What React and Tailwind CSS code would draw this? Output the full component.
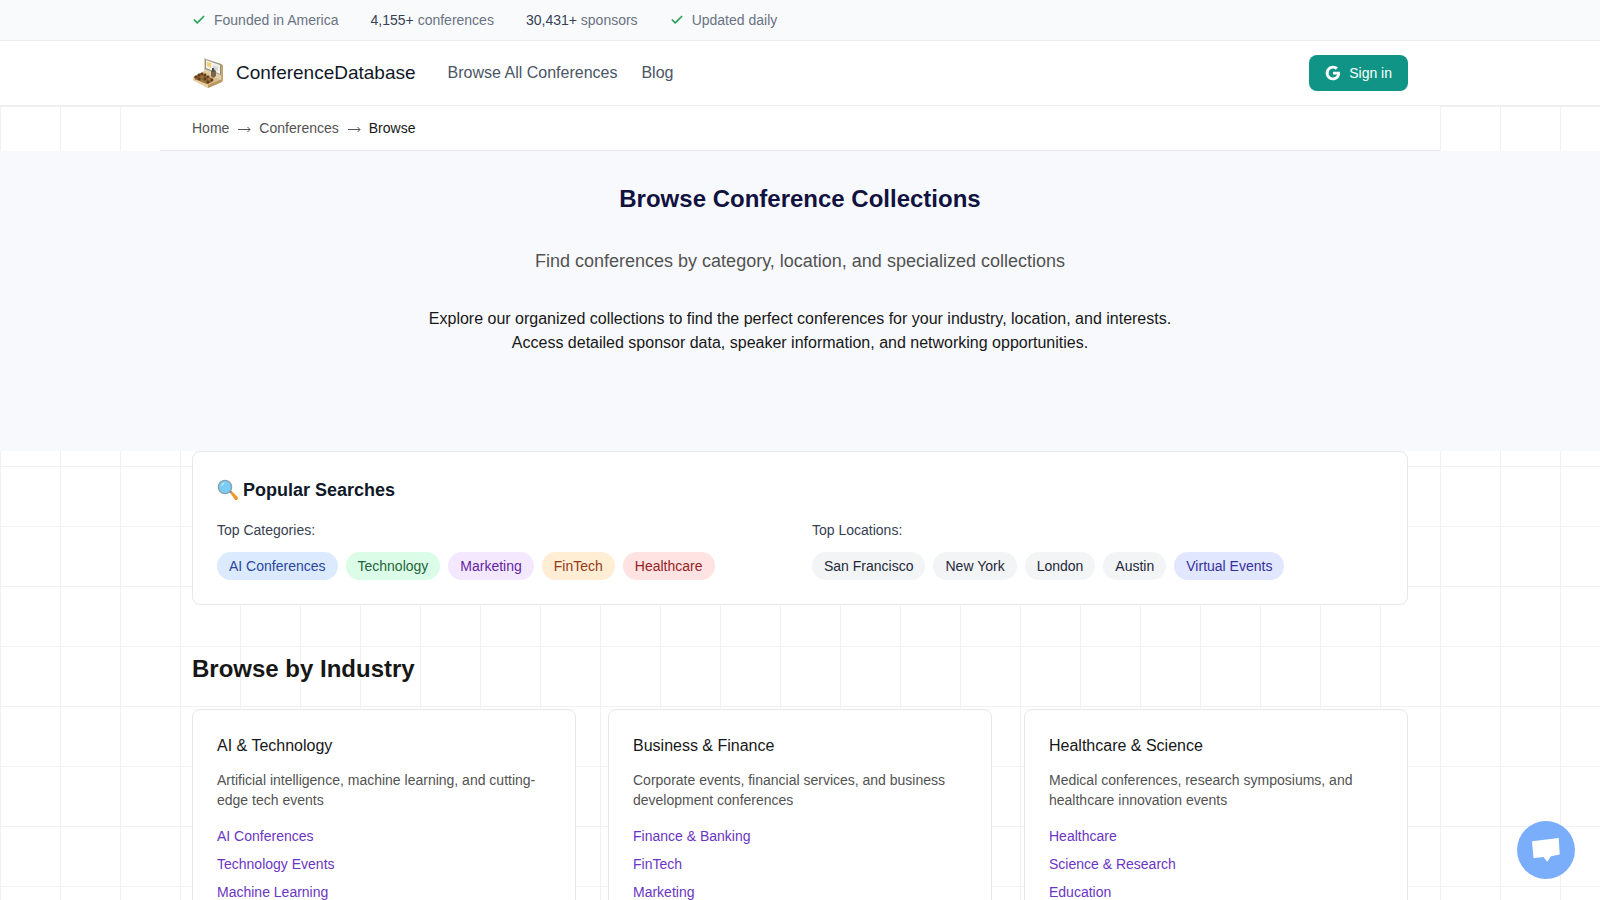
import React from "react";
import { Check } from "lucide-react";

const categories = [
  { label: "AI Conferences", style: "bg-blue-100 text-[#2a46a0]" },
  { label: "Technology", style: "bg-green-100 text-[#25643a]" },
  { label: "Marketing", style: "bg-purple-100 text-[#6425a0]" },
  { label: "FinTech", style: "bg-orange-100 text-[#933a1a]" },
  { label: "Healthcare", style: "bg-red-100 text-[#951f22]" },
];

const locations = [
  { label: "San Francisco", style: "bg-gray-100 text-gray-800" },
  { label: "New York", style: "bg-gray-100 text-gray-800" },
  { label: "London", style: "bg-gray-100 text-gray-800" },
  { label: "Austin", style: "bg-gray-100 text-gray-800" },
  { label: "Virtual Events", style: "bg-indigo-100 text-[#37309c]" },
];

const industries = [
  {
    title: "AI & Technology",
    description:
      "Artificial intelligence, machine learning, and cutting-edge tech events",
    links: ["AI Conferences", "Technology Events", "Machine Learning"],
  },
  {
    title: "Business & Finance",
    description:
      "Corporate events, financial services, and business development conferences",
    links: ["Finance & Banking", "FinTech", "Marketing"],
  },
  {
    title: "Healthcare & Science",
    description:
      "Medical conferences, research symposiums, and healthcare innovation events",
    links: ["Healthcare", "Science & Research", "Education"],
  },
];

function Logo() {
  return (
    <svg viewBox="0 0 32 32" className="h-8 w-8" aria-hidden="true">
      {/* floor slab */}
      <path d="M1 20 L14 13 L30 22 V25 L16 31 L1 23Z" fill="#d9bd8c" />
      <path d="M1 20 L16 28 V31 L1 23Z" fill="#e6cfa4" />
      <path d="M16 28 L30 22 V25 L16 31Z" fill="#b9995f" />
      {/* back wall and screen */}
      <path d="M12 1 L29 7 V23 L12 15Z" fill="#e2cfac" />
      <path d="M29 7 L31 8 V24 L29 25Z" fill="#c6a671" />
      <path d="M13 2 L29 7 V18 L13 12Z" fill="#8d8e86" />
      <path d="M14 3 L28 8 V17 L14 11Z" fill="#f3f1e8" />
      <path d="M15 5 L19 6 V11 L15 9Z" fill="#f2cf73" />
      <path d="M21 8 L26 10 V14 L21 12Z" fill="#d2dadd" />
      {/* podium */}
      <path d="M19 14 L22 12 L24 14 V19 L21 21 L19 19Z" fill="#7a6448" />
      <path d="M20 11 h2 v4 h-2Z" fill="#4a4d50" />
      {/* audience rows */}
      <path d="M2 20 L9 16 L21 22 L20 25 L15 27 L3 22Z" fill="#8a6436" />
      <g fill="#5f3d1c">
        <circle cx="4" cy="20" r="1.4" />
        <circle cx="7" cy="18" r="1.4" />
        <circle cx="10" cy="17" r="1.4" />
        <circle cx="7" cy="22" r="1.4" />
        <circle cx="13" cy="18" r="1.4" />
        <circle cx="13" cy="22" r="1.4" />
        <circle cx="16" cy="20" r="1.4" />
        <circle cx="16" cy="25" r="1.4" />
        <circle cx="20" cy="23" r="1.4" />
      </g>
      <g fill="#a5763c">
        <circle cx="10" cy="20" r="1.3" />
        <circle cx="10" cy="24" r="1.3" />
        <circle cx="13" cy="25" r="1.2" />
        <circle cx="17" cy="22" r="1.3" />
        <circle cx="4" cy="22" r="1.1" />
      </g>
    </svg>
  );
}

function GoogleIcon() {
  return (
    <svg viewBox="0 0 24 24" className="h-4 w-4" fill="currentColor" aria-hidden="true">
      <path d="M22.56 12.25c0-.78-.07-1.53-.2-2.25H12v4.26h5.92c-.26 1.37-1.04 2.53-2.21 3.31v2.77h3.57c2.08-1.92 3.28-4.74 3.28-8.09z" />
      <path d="M12 23c2.97 0 5.46-.98 7.28-2.66l-3.57-2.77c-.98.66-2.23 1.06-3.71 1.06-2.86 0-5.29-1.93-6.16-4.53H2.18v2.84C3.99 20.53 7.7 23 12 23z" />
      <path d="M5.84 14.09c-.22-.66-.35-1.36-.35-2.09s.13-1.43.35-2.09V7.07H2.18C1.43 8.55 1 10.22 1 12s.43 3.45 1.18 4.93l2.85-2.22.81-.62z" />
      <path d="M12 5.38c1.62 0 3.06.56 4.21 1.64l3.15-3.15C17.45 2.09 14.97 1 12 1 7.7 1 3.99 3.47 2.18 7.07l3.66 2.84c.87-2.6 3.3-4.53 6.16-4.53z" />
    </svg>
  );
}

function MagnifierIcon() {
  return (
    <svg viewBox="0 0 22 22" className="h-[22px] w-[22px]" aria-hidden="true">
      <path d="M12.5 13 L14 11.5 L20.6 18 Q21.6 20.6 19.4 21 Z" fill="#f0971f" />
      <path d="M13.5 14.5 L15.5 16.5 L19.4 21 Q18.6 21.2 18 20.4 Z" fill="#c66f16" />
      <path d="M11.5 12.5 L13 11 L15 13 L13.5 14.5Z" fill="#7b8a92" />
      <circle cx="8" cy="8" r="6.6" fill="#7ccdf5" stroke="#87a3b2" strokeWidth="1.4" />
      <path d="M4 7 Q5 4 8 3.6 Q6.5 6 4 7Z" fill="#d8f1fd" />
    </svg>
  );
}

function Arrow() {
  return (
    <svg
      viewBox="0 0 14 20"
      className="h-5 w-3.5"
      fill="none"
      stroke="currentColor"
      aria-hidden="true"
    >
      <path d="M1 11.5 H13 M10.5 9 L13 11.5 L10.5 14" />
    </svg>
  );
}

function Pills({ title, items }) {
  return (
    <div>
      <h3 className="mb-3 text-sm text-gray-700">{title}</h3>
      <div className="flex flex-wrap gap-2">
        {items.map((item) => (
          <a
            key={item.label}
            href="#"
            className={`rounded-full px-3 py-1 text-sm ${item.style}`}
          >
            {item.label}
          </a>
        ))}
      </div>
    </div>
  );
}

function IndustryCard({ title, description, links }) {
  return (
    <div className="rounded-lg border border-gray-200 bg-white p-6">
      <h3 className="mb-3 text-base text-neutral-900">{title}</h3>
      <p className="mb-4 text-sm text-neutral-600">{description}</p>
      <ul className="space-y-2 text-sm">
        {links.map((link) => (
          <li key={link}>
            <a href="#" className="text-[#6b35c4]">
              {link}
            </a>
          </li>
        ))}
      </ul>
    </div>
  );
}

export default function App() {
  return (
    <div className="flex h-screen flex-col overflow-hidden bg-white font-['Liberation_Sans',Arial,sans-serif] text-neutral-900">
      <div className="shrink-0 border-b border-gray-200/70 bg-slate-50">
        <div className="mx-auto flex max-w-7xl items-center gap-8 px-8 py-2.5 text-sm text-gray-500">
          <span className="flex items-center gap-2">
            <Check size={14} strokeWidth={3} className="text-[#2fa15a]" />
            Founded in America
          </span>
          <span>
            <span className="text-gray-700">4,155+</span> conferences
          </span>
          <span>
            <span className="text-gray-700">30,431+</span> sponsors
          </span>
          <span className="flex items-center gap-2">
            <Check size={14} strokeWidth={3} className="text-[#2fa15a]" />
            Updated daily
          </span>
        </div>
      </div>

      <header className="shrink-0 border-b border-gray-200/70 bg-white">
        <div className="mx-auto flex h-16 max-w-7xl items-center px-8">
          <a href="#" className="flex items-center gap-3 text-[19px] text-gray-900">
            <Logo />
            ConferenceDatabase
          </a>
          <nav className="ml-8 flex gap-6 text-base text-gray-600">
            <a href="#">Browse All Conferences</a>
            <a href="#">Blog</a>
          </nav>
          <button className="ml-auto flex items-center gap-2 rounded-lg bg-[#0f9485] px-4 py-2 text-sm text-white">
            <GoogleIcon />
            Sign in
          </button>
        </div>
      </header>

      {/* page body sits on a 60px grid */}
      <main className="flex-1 bg-[linear-gradient(to_right,#f1f1f1_1px,transparent_1px),linear-gradient(to_bottom,#f1f1f1_1px,transparent_1px)] bg-size-[60px_60px]">
        <nav className="mx-auto flex max-w-7xl gap-2 border-b border-gray-200 bg-white px-8 py-3 text-sm text-neutral-600">
          <a href="#">Home</a>
          <Arrow />
          <a href="#">Conferences</a>
          <Arrow />
          <span className="text-neutral-900">Browse</span>
        </nav>

        <section className="bg-[#f8f9fd] px-8 pt-8 pb-24 text-center">
          <h1 className="mb-8 text-2xl font-bold text-[#11123f]">
            Browse Conference Collections
          </h1>
          <p className="mb-8 text-lg text-neutral-600">
            Find conferences by category, location, and specialized collections
          </p>
          <p className="mx-auto max-w-3xl text-base text-neutral-900">
            Explore our organized collections to find the perfect conferences
            for your industry, location, and interests. Access detailed sponsor
            data, speaker information, and networking opportunities.
          </p>
        </section>

        <div className="mx-auto max-w-7xl px-8">
          <section className="mb-12 rounded-lg border border-gray-200 bg-white p-6">
            <h2 className="mb-4 flex items-center gap-1 text-lg font-bold text-gray-900">
              <MagnifierIcon />
              Popular Searches
            </h2>
            <div className="grid grid-cols-2 gap-6">
              <Pills title="Top Categories:" items={categories} />
              <Pills title="Top Locations:" items={locations} />
            </div>
          </section>

          <section>
            <h2 className="mb-6 text-2xl font-bold">Browse by Industry</h2>
            <div className="grid grid-cols-3 gap-8">
              {industries.map((industry) => (
                <IndustryCard key={industry.title} {...industry} />
              ))}
            </div>
          </section>
        </div>
      </main>

      <button
        aria-label="Open chat"
        className="fixed right-[25px] bottom-[21px] flex h-[58px] w-[58px] items-center justify-center rounded-full bg-[#7aadfa]"
      >
        <svg viewBox="0 0 28 24" className="h-6 w-7" fill="white" aria-hidden="true">
          <path d="M0 3.3 L26.7 0 L27.7 16.5 L19 18.2 L15.3 23.8 L11.3 19 L1.5 20.2Z" />
        </svg>
      </button>
    </div>
  );
}
